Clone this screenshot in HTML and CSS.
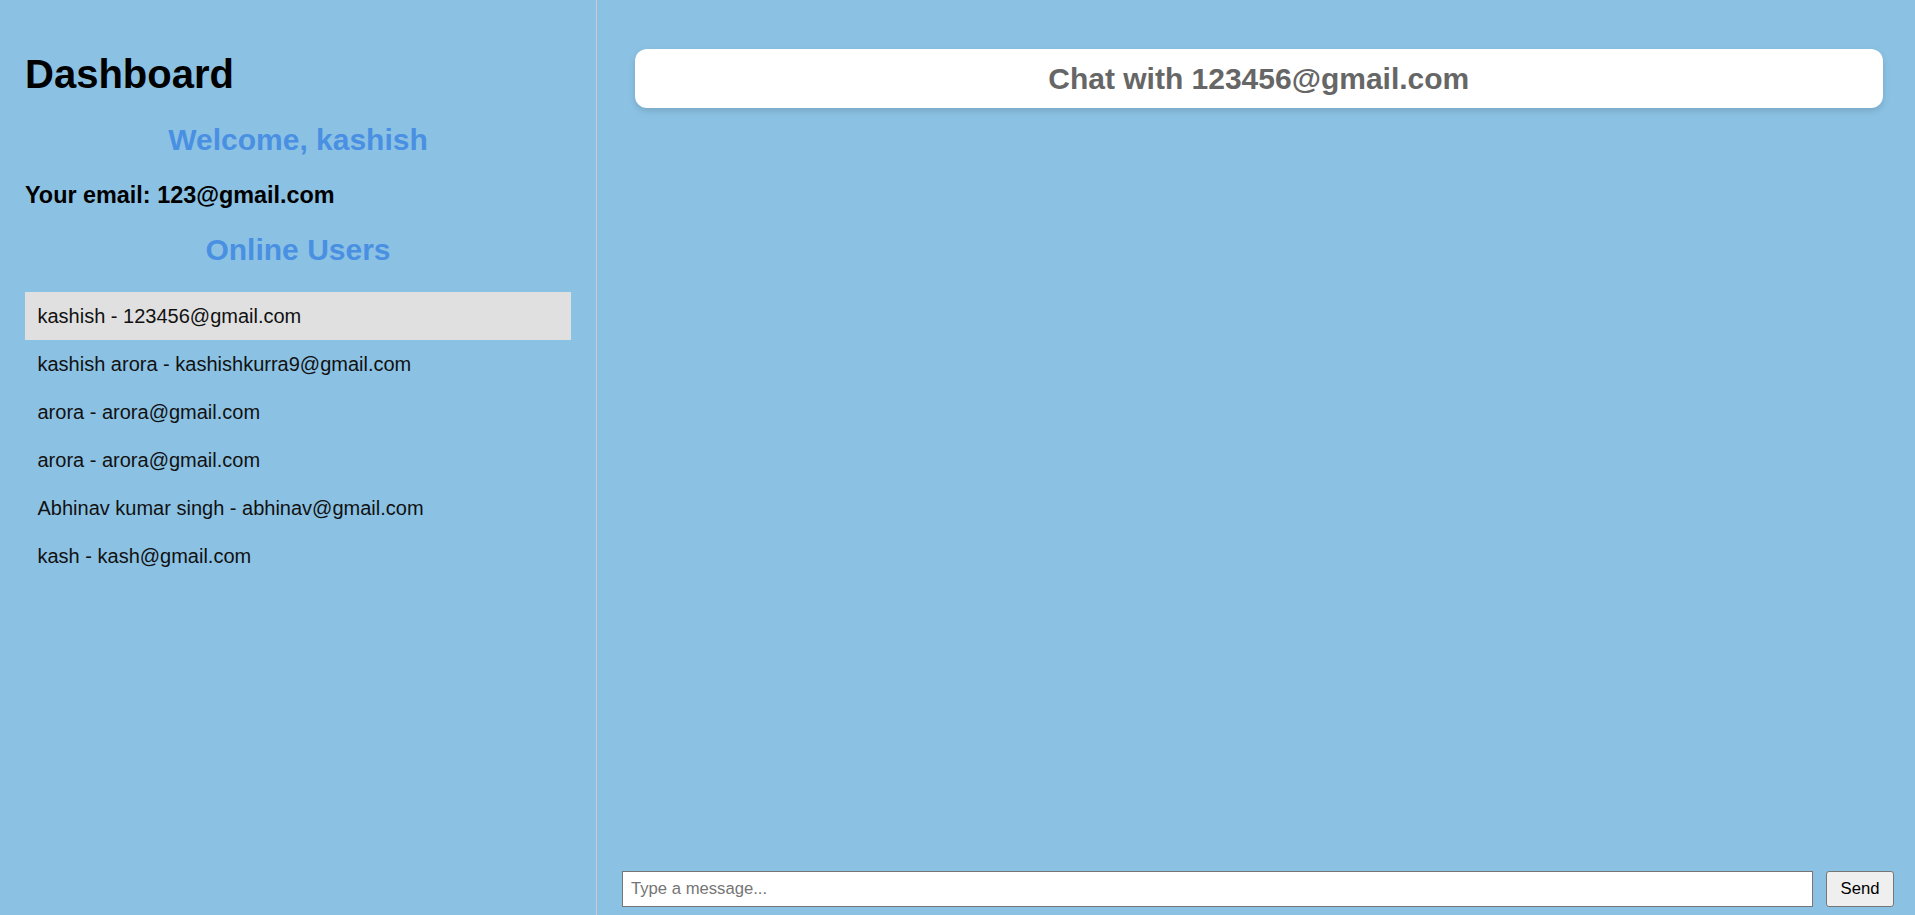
FILE: index.html
```html
<!DOCTYPE html>
<html lang="en">
<head>
<meta charset="utf-8">
<title>Dashboard</title>
<link rel="stylesheet" href="styles.css">
</head>
<body>
<div class="app">
  <aside class="sidebar">
    <h1 class="title">Dashboard</h1>
    <h2 class="welcome">Welcome, kashish</h2>
    <h3 class="email">Your email: 123@gmail.com</h3>
    <h2 class="online">Online Users</h2>
    <ul class="users">
      <li class="user active">kashish - 123456@gmail.com</li>
      <li class="user">kashish arora - kashishkurra9@gmail.com</li>
      <li class="user">arora - arora@gmail.com</li>
      <li class="user">arora - arora@gmail.com</li>
      <li class="user">Abhinav kumar singh - abhinav@gmail.com</li>
      <li class="user">kash - kash@gmail.com</li>
    </ul>
  </aside>
  <main class="chat">
    <div class="chat-header">Chat with 123456@gmail.com</div>
    <div class="messages"></div>
    <div class="composer">
      <input class="msg-input" type="text" placeholder="Type a message...">
      <button class="send-btn" type="button">Send</button>
    </div>
  </main>
</div>
</body>
</html>
```
FILE: styles.css
```css
* { box-sizing: border-box; }
html, body {
  margin: 0;
  padding: 0;
  height: 100%;
}
body {
  font-family: "Liberation Sans", Arial, sans-serif;
  background: #8bc2e4;
  color: #000;
  overflow: hidden;
}
.app {
  display: flex;
  height: 915px;
}
.sidebar {
  width: 597px;
  flex: none;
  padding: 51px 25px 0 25px;
  border-right: 1px solid #cfc9c9;
}
.title {
  margin: 0 0 25px;
  font-size: 40px;
  line-height: 46px;
  font-weight: bold;
}
.welcome, .online {
  margin: 0;
  font-size: 30px;
  line-height: 35px;
  font-weight: bold;
  color: #4a90e2;
  text-align: center;
}
.email {
  margin: 25px 0 0;
  font-size: 23.4px;
  line-height: 27px;
  font-weight: bold;
}
.online {
  margin-top: 23px;
}
.users {
  list-style: none;
  margin: 25px 0 0;
  padding: 0;
}
.user {
  padding: 12px 12.5px;
  font-size: 20px;
  line-height: 24px;
  color: #111;
}
.user.active {
  background: #e0e0e0;
}
.chat {
  flex: 1;
  display: flex;
  flex-direction: column;
  min-width: 0;
}
.chat-header {
  margin: 49px 32px 0 37.5px;
  padding: 12px 20px;
  background: #fff;
  border-radius: 12px;
  box-shadow: 0 3px 7px rgba(0, 0, 0, 0.14);
  text-align: center;
  font-size: 30px;
  line-height: 35px;
  font-weight: bold;
  color: #666;
}
.messages {
  flex: 1;
}
.composer {
  display: flex;
  align-items: stretch;
  gap: 13px;
  padding: 0 21px 8px 25px;
}
.msg-input {
  flex: 1;
  height: 36px;
  padding: 0 8px;
  border: 1px solid #767676;
  border-radius: 0;
  background: #fff;
  font-family: "Liberation Sans", Arial, sans-serif;
  font-size: 16.67px;
  color: #000;
}
.msg-input::placeholder {
  color: #757575;
}
.send-btn {
  width: 68px;
  height: 36px;
  padding: 0;
  border: 1px solid #767676;
  border-radius: 3px;
  background: #efefef;
  font-family: "Liberation Sans", Arial, sans-serif;
  font-size: 16.67px;
  color: #000;
}
```
